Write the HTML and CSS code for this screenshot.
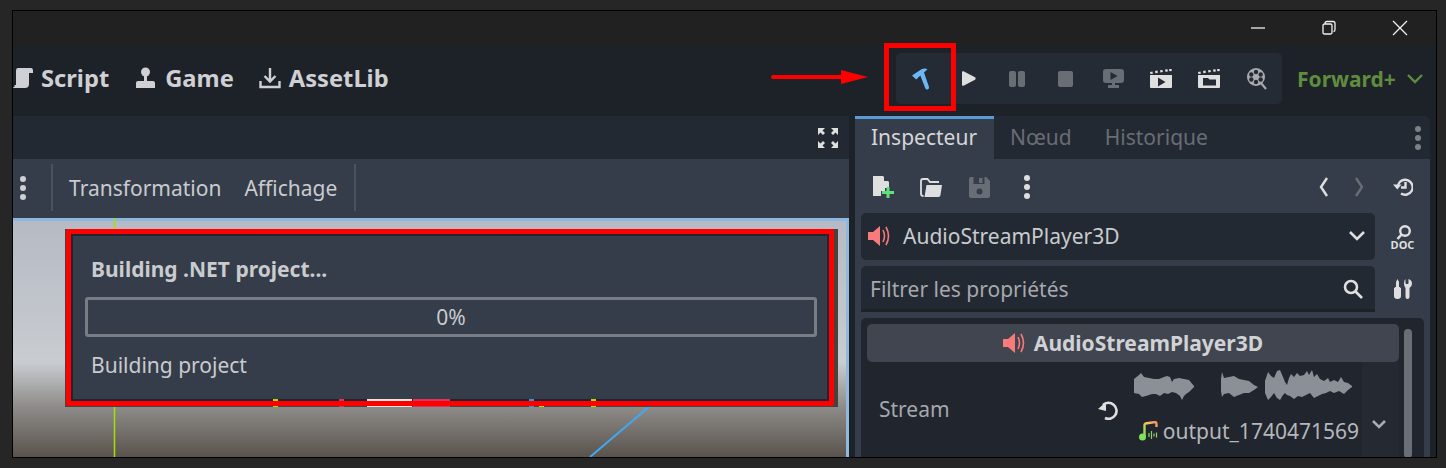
FILE: index.html
```html
<!DOCTYPE html>
<html lang="fr">

<head>
  <meta charset="UTF-8" />
  <title>Godot - Building .NET project</title>
  <link rel="stylesheet" href="styles.css">
</head>

<body>
  <div class="window">
    <div class="titlebar">
      <svg class="winbtn" viewBox="0 0 16 16"><path d="M1 8h14" /></svg>
      <svg class="winbtn" viewBox="0 0 16 16"><path d="M4 3.500q0-2 2-2h6q2 0 2 2v6q0 2-1.500 2M3.500 4h6q1.500 0 1.500 1.500v7q0 1.500-1.500 1.500h-6q-1.500 0-1.500-1.500v-7q0-1.500 1.500-1.500z" /></svg>
      <svg class="winbtn" viewBox="0 0 16 16"><path d="M1 1l14 14M15 1L1 15" /></svg>
    </div>

    <div class="topbar">
      <nav class="modes">
        <a class="mode">
          <svg width="20" height="22" viewBox="0 0 20 22"><path fill="#cfd0d3" d="M5 1h13q2 0 2 3v2h-4v11q0 4-4 4H1q-1 0-1-1v-2h3V4q0-3 2-3z" /><path fill="#1d2229" d="M0 16h3v1.500H1.500V20H0z" /></svg>
          Script
        </a>
        <a class="mode">
          <svg width="23" height="22" viewBox="0 0 23 22"><circle cx="11.500" cy="5" r="4.500" fill="#cfd0d3" /><path fill="#cfd0d3" d="M10 8h3v6h6q2 0 2 2v5H2v-5q0-2 2-2h6z" /></svg>
          Game
        </a>
        <a class="mode">
          <svg width="22" height="22" viewBox="0 0 22 22" fill="none" stroke="#cfd0d3" stroke-width="2.400"><path d="M11 1v13M5.500 9l5.500 5.500L16.500 9M1.500 14v6h19v-6" /></svg>
          AssetLib
        </a>
      </nav>

      <div class="run-bar">
        <span class="run-btn">
          <svg width="18" height="22" viewBox="0 0 18 22"><path fill="#6cb8f6" d="M0 7.500L9.500 1.200Q13 0 15.500 1.300L12 4.600 17 19q.3 2-1.500 2.500-1.500.3-2.200-1.200L8.300 7.600 4.200 11.500z" /></svg>
        </span>
        <span class="run-btn">
          <svg width="14" height="15" viewBox="0 0 14 15"><path fill="#dfdfdf" d="M0 1q0-1 1.500-.7L13 6.300q1.300 1.200 0 2.400L1.500 14.700Q0 15 0 14z" /></svg>
        </span>
        <span class="run-btn">
          <svg width="16" height="16" viewBox="0 0 16 16" fill="#696d75"><rect width="7" height="16" rx="2" /><rect x="9" width="7" height="16" rx="2" /></svg>
        </span>
        <span class="run-btn">
          <svg width="15" height="16" viewBox="0 0 15 16"><rect width="15" height="16" rx="2" fill="#696d75" /></svg>
        </span>
        <span class="run-btn">
          <svg width="21" height="19" viewBox="0 0 21 19"><path fill="#696d75" d="M3 0h15q3 0 3 3v8q0 3-3 3h-6v2h4v3H5v-3h4v-2H3q-3 0-3-3V3q0-3 3-3z" /><path fill="#252b35" d="M7.500 3l7 4-7 4z" /></svg>
        </span>
        <span class="run-btn">
          <svg width="22" height="19" viewBox="0 0 22 19"><path fill="#dfdfdf" d="M0 3l2.500-.5.400 2.200-2.500.4zM5 2l2.500-.4.400 2.200-2.500.4zM10 1.300l2.500-.4.400 2.200-2.500.4zM15 .6l2.500-.4.400 2.200-2.500.4zM19 0l2.500-.3.300 2.200-2.400.3zM0 6h22v12q0 1-1 1H1q-1 0-1-1z" /><path fill="#252b35" d="M8 8.500l7.500 4.500L8 17.500z" /></svg>
        </span>
        <span class="run-btn">
          <svg width="22" height="19" viewBox="0 0 22 19"><path fill="#dfdfdf" d="M0 3l2.500-.5.400 2.200-2.500.4zM5 2l2.500-.4.400 2.200-2.500.4zM10 1.300l2.500-.4.400 2.200-2.500.4zM15 .6l2.500-.4.400 2.200-2.500.4zM19 0l2.500-.3.300 2.200-2.400.3zM0 6h22v12q0 1-1 1H1q-1 0-1-1z" /><path fill="#252b35" d="M5 9h5l1.500 1.500H18v6H5z" /></svg>
        </span>
        <span class="run-btn">
          <svg width="20" height="22" viewBox="0 0 20 22"><circle cx="9" cy="9" r="9" fill="#a9abae" /><g fill="#252b35"><circle cx="9" cy="4" r="2.200" /><circle cx="9" cy="14" r="2.200" /><circle cx="4.300" cy="6.500" r="2.200" /><circle cx="13.700" cy="6.500" r="2.200" /><circle cx="4.300" cy="11.500" r="2.200" /><circle cx="13.700" cy="11.500" r="2.200" /></g><path d="M14 15l5 6" stroke="#a9abae" stroke-width="2" /></svg>
        </span>
      </div>

      <div class="renderer">
        Forward+
        <svg width="16" height="10" viewBox="0 0 16 10" fill="none" stroke="#5f8c3e" stroke-width="2.400"><path d="M1 1l7 7 7-7" /></svg>
      </div>
    </div>

    <div class="workspace">
      <section class="editor">
        <div class="editor-tabs">
          <svg width="22" height="22" viewBox="0 0 22 22" fill="#dfdfdf"><path d="M1 1h7L5.500 3.500 8 6 6 8 3.500 5.500 1 8zM21 1v7l-2.500-2.500L16 8l-2-2 2.500-2.500L14 1zM1 21v-7l2.500 2.500L6 14l2 2-2.500 2.500L8 21zM21 21h-7l2.500-2.500L14 16l2-2 2.500 2.500L21 14z" /></svg>
        </div>
        <div class="editor-tools">
          <svg class="dots" width="6" height="24" viewBox="0 0 6 24" fill="#cfd0d3"><circle cx="3" cy="3" r="3" /><circle cx="3" cy="12" r="3" /><circle cx="3" cy="21" r="3" /></svg>
          <span class="vsep"></span>
          <span class="tool-menu">Transformation</span>
          <span class="tool-menu">Affichage</span>
          <span class="vsep"></span>
        </div>
        <div class="viewport">
          <svg class="gizmos" width="836" height="239" viewBox="0 0 836 239" fill="none">
            <path d="M101.500 0v239" stroke="#a5e000" stroke-width="1.500" />
            <path d="M637 188l-60 51" stroke="#3fa9f5" stroke-width="2" />
          </svg>
          <div class="build-dialog">
            <div class="build-panel">
              <h3 class="build-title">Building .NET project...</h3>
              <div class="build-progress">0%</div>
              <p class="build-step">Building project</p>
            </div>
            <svg class="build-marks" width="773" height="8" viewBox="0 0 773 8">
              <path d="M208 0h5v2h-5zM208 7h5v1h-5zM526 0h5v2h-5zM526 7h5v1h-5zM474 7h5v1h-5z" fill="#a5e000" />
              <path d="M274 0h5v2h-5zM274 7h5v1h-5zM348 0h37v2h-37zM348 7h37v1h-37z" fill="#d6355c" />
              <path d="M302 0h45v2h-45zM302 7h45v1h-45z" fill="#e9e6da" />
              <path d="M464 0h5v2h-5zM464 7h5v1h-5z" fill="#2c96e0" />
            </svg>
          </div>
        </div>
      </section>

      <aside class="dock">
        <div class="dock-tabs">
          <span class="dock-tab active">Inspecteur</span>
          <span class="dock-tab">Nœud</span>
          <span class="dock-tab">Historique</span>
          <svg class="dock-menu" width="6" height="24" viewBox="0 0 6 24" fill="#7d8086"><circle cx="3" cy="3" r="3" /><circle cx="3" cy="12" r="3" /><circle cx="3" cy="21" r="3" /></svg>
        </div>

        <div class="dock-body">
          <div class="file-row">
            <span class="icon-btn">
              <svg width="21" height="22" viewBox="0 0 21 22"><path fill="#dfdfdf" d="M0 0h10l6 6v6h-4v3H8v5H0z" /><path fill="#363d4a" d="M11 0l5 5h-5z" /><path fill="#5fe07a" d="M13.500 11h3v4H21v3h-4.500v4h-3v-4H9v-3h4.500z" /></svg>
            </span>
            <span class="icon-btn">
              <svg width="22" height="19" viewBox="0 0 22 19"><path fill="none" stroke="#dfdfdf" stroke-width="1.800" d="M3.500 18Q1 18 1 16V3q0-2 2-2h4.500l2.500 3h9" /><path fill="#dfdfdf" d="M6.500 7H22l-1.500 10q-.3 2-2 2H4.500z" /></svg>
            </span>
            <span class="icon-btn">
              <svg width="21" height="21" viewBox="0 0 21 21"><path fill="#696d75" d="M2 0h15l4 4v15q0 2-2 2H2q-2 0-2-2V2q0-2 2-2z" /><path fill="#363d4a" d="M4.500 0h11v7h-11z" /><path fill="#696d75" d="M10 1h3.500v5H10z" /><circle cx="10.500" cy="14.500" r="3" fill="#363d4a" /></svg>
            </span>
            <span class="icon-btn">
              <svg width="6" height="24" viewBox="0 0 6 24" fill="#dfdfdf"><circle cx="3" cy="3" r="3" /><circle cx="3" cy="12" r="3" /><circle cx="3" cy="21" r="3" /></svg>
            </span>
            <span class="spacer"></span>
            <svg width="9" height="20" viewBox="0 0 9 20" fill="none" stroke="#dfdfdf" stroke-width="2.400"><path d="M8 1L2 10l6 9" /></svg>
            <svg class="nav-next" width="9" height="20" viewBox="0 0 9 20" fill="none" stroke="#696d75" stroke-width="2.400"><path d="M1 1l6 9-6 9" /></svg>
            <span class="side-slot">
              <svg width="20" height="18" viewBox="0 0 20 18" fill="none" stroke="#dfdfdf" stroke-width="2.400"><path d="M5 7a7.500 7.500 0 1 1 3 8.500M12.500 4v5.500H8" /><path d="M0 6.500h8.500l-4.200 5z" fill="#dfdfdf" stroke="none" /></svg>
            </span>
          </div>

          <div class="field-row">
            <div class="field selector">
              <svg class="speaker" width="22" height="22" viewBox="0 0 22 22"><path fill="#f97a7a" d="M0 7h5l7-6v20l-7-6H0z" /><path fill="none" stroke="#f97a7a" stroke-width="1.600" d="M15 5q3 6 0 12M18 2q5 9 0 18" /></svg>
              <span class="field-text">AudioStreamPlayer3D</span>
              <svg width="16" height="10" viewBox="0 0 16 10" fill="none" stroke="#dfdfdf" stroke-width="2.600"><path d="M1 1l7 7 7-7" /></svg>
            </div>
            <span class="side-slot doc-btn">
              <svg width="18" height="15" viewBox="0 0 18 15" fill="none"><circle cx="11" cy="6" r="4.800" stroke="#dfdfdf" stroke-width="2.400" /><path d="M7.500 9.500L3.500 14" stroke="#dfdfdf" stroke-width="2.600" /></svg>
              <span class="doc-label">DOC</span>
            </span>
          </div>

          <div class="field-row">
            <div class="field filter">
              <span class="field-text muted">Filtrer les propriétés</span>
              <svg width="20" height="20" viewBox="0 0 20 20" fill="none" stroke="#dfdfdf" stroke-width="2.600"><circle cx="8" cy="8" r="6" /><path d="M12.500 12.500L19 19" /></svg>
            </div>
            <span class="side-slot">
              <svg width="18" height="20" viewBox="0 0 18 20" fill="#dfdfdf"><path d="M3.500 0L5 3v5h1.200v1H7v8q0 3-3.500 3T0 17V9h.800V8H2V3z" /><path d="M11.500 0v4q0 1 1 1h1q1 0 1-1V0Q18 1 18 4.500q0 3-2.500 4.500v9q0 2-2 2t-2-2V9Q10 7.500 10 4.500 10 1 11.500 0z" /></svg>
            </span>
          </div>

          <div class="props">
            <div class="props-main">
              <div class="props-header">
                <svg width="22" height="22" viewBox="0 0 22 22"><path fill="#f97a7a" d="M0 7h5l7-6v20l-7-6H0z" /><path fill="none" stroke="#f97a7a" stroke-width="1.600" d="M15 5q3 6 0 12M18 2q5 9 0 18" /></svg>
                AudioStreamPlayer3D
              </div>
              <div class="prop-row">
                <span class="prop-label">Stream</span>
                <svg class="revert" width="22" height="20" viewBox="0 0 22 20" fill="none" stroke="#dfdfdf" stroke-width="2.600"><path d="M6 5a8 8 0 1 1 2 13" /><path d="M1 9l8-7v9z" fill="#dfdfdf" stroke="none" /></svg>
                <div class="stream-value">
                  <svg class="wave" width="218" height="32" viewBox="0 0 218 32"><path fill="#8b8f96" d="M0 10L5 6l2-2 3 4 5 1 5 1 5 0 5-2 3-1 3 1 2 5 2-3 5-1 5 1 5 1 5 6v1l-5 5-3 2-2 2-2 4-2-4-4-3-4-1-4 2-4-1-4 3-4-2-4 0-6 2-4 1-3-3-5-1zM87 10l1-7 2 6 5-1 5-1 5 3 5 1 5 1 5 4 4 2-4 3-5 3-5 0-5 2-5 2-5-4-5 1-2 3-1-6zM131 12l3-9 3 4 3 2 3-7 3-1 3 7 2 5 2 3 2-7 2-4 3 3 3-4 3 3 4-1 3-4 2 4 3-5 2 7 3-3 3 5 4 2 4-3 2 4 4-2 4 2 3-5 3 5 4 1 4 3v1l-4 3-4 4-5-3-5 2-4-2-4 2-4 1-4 2-4 2-4-5-4 2-4 2-4-1-4 3-4-3-3-1-2-2-2 2-3 5-3-2-3-5-3 4-3 3-3-7z" /></svg>
                  <div class="stream-file">
                    <svg width="20" height="20" viewBox="0 0 20 20" fill="none"><defs><linearGradient id="note" x1="0" y1="1" x2="1" y2="0"><stop offset="0" stop-color="#7fe05a" /><stop offset=".6" stop-color="#f7c45e" /><stop offset="1" stop-color="#f58a6a" /></linearGradient></defs><path d="M5.500 15V4q0-1 1-1.500L16 1q1.500 0 1.500 2v3" stroke="url(#note)" stroke-width="2.400" /><circle cx="3.500" cy="16" r="3.500" fill="#7fe05a" /><path d="M10 12v4M12.500 10v8M15 12.500v3M17.500 11.500v5" stroke="#8fd06a" stroke-width="1.200" /></svg>
                    <span>output_1740471569</span>
                  </div>
                </div>
                <div class="prop-more">
                  <svg width="14" height="9" viewBox="0 0 14 9" fill="none" stroke="#a9abae" stroke-width="2.600"><path d="M1 1l6 6 6-6" /></svg>
                </div>
              </div>
            </div>
            <div class="scrollbar"><span class="scroll-thumb"></span></div>
          </div>
        </div>
      </aside>
    </div>
  </div>

  <!-- red annotations drawn on top of the screenshot -->
  <div class="mark-hammer"></div>
  <svg class="mark-arrow" width="97" height="20" viewBox="0 0 97 20"><path d="M2 10h70" stroke="#ff0000" stroke-width="4" stroke-linecap="round" /><path d="M70 3l27 7-27 7z" fill="#ff0000" /></svg>
</body>

</html>
```

FILE: styles.css
```css
* {
  box-sizing: border-box;
}

body {
  margin: 0;
  width: 1446px;
  height: 468px;
  padding: 10px 9px 10px 12px;
  position: relative;
  overflow: hidden;
  background-color: #262626;
  font-family: "Noto Sans", sans-serif;
  font-size: 21px;
  color: #c9cbce;
}

.window {
  height: 448px;
  border: 1px solid #000;
  display: flex;
  flex-direction: column;
  overflow: hidden;
  background-color: #1d2229;
}

/* title bar */
.titlebar {
  height: 34px;
  flex: none;
  display: flex;
  justify-content: flex-end;
  align-items: center;
  gap: 55px;
  padding-right: 28px;
  background-color: #212121;
}

.winbtn {
  width: 16px;
  height: 16px;
  fill: none;
  stroke: #f0f0f0;
  stroke-width: 1.300;
}

/* main toolbar */
.topbar {
  height: 71px;
  flex: none;
  display: flex;
  align-items: center;
  padding-bottom: 4px;
  background-color: #1d2229;
}

.modes {
  display: flex;
  align-items: center;
  gap: 25px;
  width: 883px;
  margin-bottom: 2px;
}

.mode {
  display: flex;
  align-items: center;
  gap: 8px;
  font-size: 23.700px;
  font-weight: 700;
  color: #cfd0d3;
}

.run-bar {
  width: 386px;
  height: 51px;
  display: flex;
  align-items: center;
  padding-left: 1px;
  border-radius: 5px;
  background-color: #252b35;
}

.run-btn {
  width: 48px;
  height: 51px;
  flex: none;
  display: flex;
  align-items: center;
  justify-content: center;
}

.renderer {
  display: flex;
  align-items: center;
  gap: 11px;
  margin-left: 15px;
  font-size: 21px;
  font-weight: 700;
  color: #5f8c3e;
}

/* editor side */
.workspace {
  flex: 1;
  min-height: 0;
  display: flex;
  gap: 6px;
}

.editor {
  width: 836px;
  flex: none;
  display: flex;
  flex-direction: column;
}

.editor-tabs {
  height: 43px;
  flex: none;
  display: flex;
  align-items: center;
  justify-content: flex-end;
  padding-right: 10px;
  background-color: #232932;
}

.editor-tools {
  height: 59px;
  flex: none;
  display: flex;
  align-items: center;
  padding-bottom: 2px;
  background-color: #363d4a;
}

.dots {
  margin-left: 7px;
}

.vsep {
  width: 2px;
  height: 47px;
  margin-left: 25px;
  background-color: #4b515d;
}

.vsep + .tool-menu {
  margin-left: 16px;
}

.tool-menu {
  margin-left: 23px;
  color: #c9cbce;
}

.tool-menu + .vsep {
  margin-left: 17px;
}

.viewport {
  flex: 1;
  position: relative;
  border-top: 3px solid #8fb8e0;
  border-right: 3px solid #8fb8e0;
  background: linear-gradient(#b5bac4 0, #c9ccd0 60%, #8d8b88 79%, #5a534d 100%);
}

.gizmos {
  position: absolute;
  left: 0;
  top: -3px;
}

.build-dialog {
  position: absolute;
  left: 52px;
  top: 8px;
  width: 773px;
  height: 178px;
  padding: 0 4px 0 1px;
  background-color: #47423c;
}

.build-panel {
  height: 177px;
  padding: 20px 12px 0 20px;
  border: 5px solid #ff0000;
  border-radius: 2px;
  box-shadow: inset 0 0 0 2px #21262e;
  background-color: #363d4a;
}

.build-marks {
  position: absolute;
  left: 0;
  top: 170px;
}

.build-title {
  margin: 0 0 13px 0;
  font-size: 21px;
  line-height: 30px;
  font-weight: 700;
  color: #c9cbce;
}

.build-progress {
  height: 40px;
  margin-left: -6px;
  border: 3px solid #787c84;
  border-radius: 3px;
  text-align: center;
  line-height: 35px;
  font-size: 21px;
}

.build-step {
  margin: 12px 0 0 0;
  font-size: 21px;
  line-height: 32px;
}

/* inspector dock */
.dock {
  width: 575px;
  flex: none;
  display: flex;
  flex-direction: column;
}

.dock-tabs {
  height: 43px;
  flex: none;
  display: flex;
  align-items: center;
  border-radius: 0 6px 0 0;
  background-color: #232932;
}

.dock-tab {
  height: 43px;
  padding: 0 16px;
  line-height: 43px;
  font-size: 21px;
  color: #696d75;
}

.dock-tab + .dock-tab + .dock-tab {
  margin-left: 1px;
}

.dock-tab.active {
  width: 139px;
  border-top: 3px solid #5b9bd5;
  line-height: 37px;
  color: #d5d6d9;
  background-color: #363d4a;
}

.dock-menu {
  margin-left: auto;
  margin-right: 9px;
}

.dock-body {
  flex: 1;
  min-height: 0;
  padding-left: 6px;
  background-color: #363d4a;
}

.file-row {
  height: 54px;
  display: flex;
  align-items: center;
  padding-top: 2px;
  margin-left: -2px;
}

.icon-btn {
  width: 48px;
  display: flex;
  justify-content: center;
  flex: none;
}

.spacer {
  flex: 1;
}

.nav-next {
  margin-left: 27px;
  margin-right: 11px;
}

.side-slot {
  width: 55px;
  flex: none;
  display: flex;
  align-items: center;
  justify-content: center;
}

.doc-btn {
  flex-direction: column;
}

.doc-label {
  font-size: 11px;
  line-height: 9px;
  font-weight: 700;
  color: #dfdfdf;
}

.field-row {
  display: flex;
  align-items: center;
  margin-bottom: 6px;
}

.field {
  width: 514px;
  height: 47px;
  flex: none;
  display: flex;
  align-items: center;
  padding: 0 10px 0 7px;
  border-radius: 5px;
  background-color: #232932;
}

.selector {
  padding-bottom: 2px;
}

.filter {
  height: 46px;
  padding: 2px 12px 0 9px;
  border-bottom: 3px solid #1d2229;
  border-radius: 5px 5px 0 0;
}

.speaker {
  margin-right: 13px;
}

.field-text {
  flex: 1;
}

.field-text.muted {
  color: #a5a8ad;
}

.props {
  width: 563px;
  height: 140px;
  display: flex;
  padding: 6px 0 0 6px;
  border-radius: 5px 5px 0 0;
  background-color: #21262e;
}

.props-main {
  width: 532px;
  flex: none;
}

.props-header {
  height: 38px;
  display: flex;
  align-items: center;
  justify-content: center;
  gap: 9px;
  border-radius: 5px;
  font-size: 21px;
  font-weight: 700;
  color: #d0d2d5;
  background-color: #40454f;
}

.prop-row {
  display: flex;
  height: 100px;
}

.prop-label {
  width: 230px;
  flex: none;
  padding: 33px 0 0 12px;
  font-size: 21px;
  color: #a5a8ad;
}

.revert {
  flex: none;
  margin: 38px 0 0 0;
}

.stream-value {
  width: 243px;
  flex: none;
  padding: 7px 0 0 15px;
}

.wave {
  display: block;
}

.stream-file {
  display: flex;
  align-items: center;
  justify-content: flex-end;
  gap: 4px;
  margin-top: 16px;
  padding-right: 3px;
  font-size: 21px;
  white-space: nowrap;
  color: #b5b7bb;
}

.prop-more {
  flex: 1;
  padding: 45px 0 0 10px;
  background-color: #242932;
}

.scrollbar {
  width: 8px;
  margin-left: 5px;
  padding-top: 5px;
}

.scroll-thumb {
  display: block;
  height: 100%;
  border-radius: 4px;
  background-color: #6a6e75;
}

/* annotations */
.mark-hammer {
  position: absolute;
  left: 884px;
  top: 43px;
  width: 72px;
  height: 68px;
  border: 5px solid #ff0000;
}

.mark-arrow {
  position: absolute;
  left: 771px;
  top: 67px;
}
```
